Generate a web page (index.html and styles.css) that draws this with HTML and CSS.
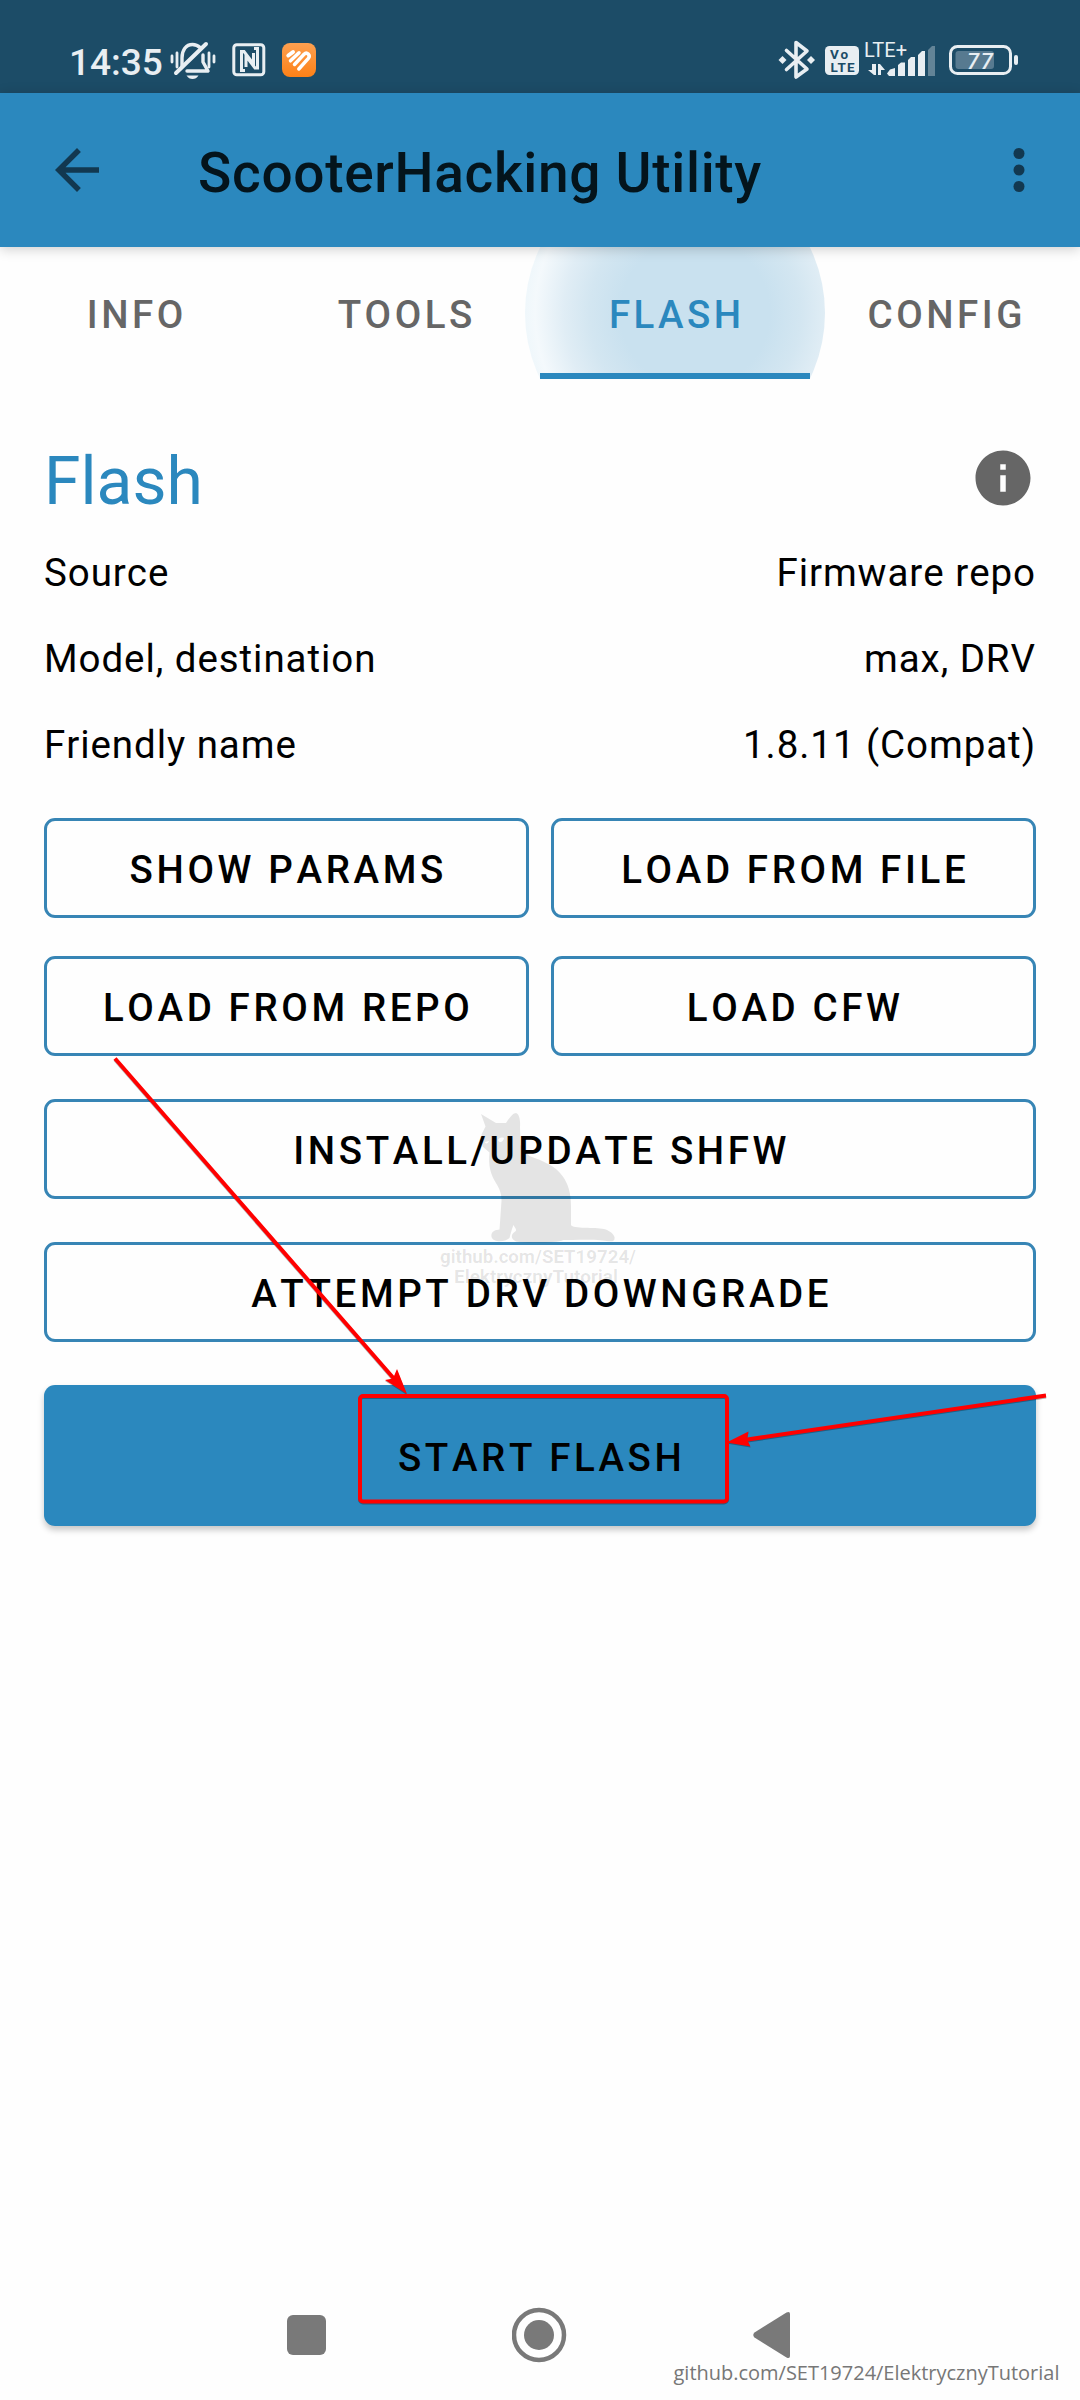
FILE: index.html
```html
<!DOCTYPE html>
<html lang="en">
<head>
<meta charset="utf-8">
<title>ScooterHacking Utility</title>
<link rel="stylesheet" href="styles.css">
</head>
<body>
<div class="screen">
  <header class="status">
    <div class="status-left">
      <span class="clock">14:35</span>
      <svg class="ic-bell" width="46" height="40" viewBox="0 0 46 40" fill="none" stroke="#e8eef2" stroke-width="3.4" stroke-linecap="round">
        <path d="M2 15v6M7 12v14M39 12v14M44 15v6" stroke-width="2.800"/>
        <path d="M12 25V17c0-8 4-13.500 10.500-13.500 3 0 5.500 1 7.500 3"/>
        <path d="M33 14v7l5 9H17" stroke-linejoin="round"/>
        <path d="M6 32 36 3" stroke-width="4"/>
        <path d="M16.500 34.500h12c-1.500 2.500-3.500 3.500-6 3.500s-4.500-1-6-3.500z" fill="#e8eef2" stroke="none"/>
      </svg>
      <svg class="ic-nfc" width="34" height="34" viewBox="0 0 34 34" fill="none" stroke="#e8eef2" stroke-width="3">
        <rect x="1.800" y="1.800" width="30" height="30" rx="3"/>
        <path d="M13 27.500H9.500V8.500H12L21.500 21V10M22 5.500h3.500V25H23L14 13v11"/>
      </svg>
      <svg class="ic-app" width="34" height="34" viewBox="0 0 34 34">
        <defs><linearGradient id="orange" x1="0" y1="0" x2="0" y2="1"><stop offset="0" stop-color="#fda050"/><stop offset="1" stop-color="#fd8117"/></linearGradient></defs>
        <rect width="34" height="34" rx="8" fill="url(#orange)"/>
        <g fill="none" stroke="#fff" stroke-width="3.500" stroke-linecap="round">
          <path d="M6.300 12.500l4.700-3.500" stroke-width="4"/><path d="M8.500 17.800l8.500-8"/>
          <path d="M12.500 21.500 22 11.200c3-2.700 6.800 1 4.300 4.300L16.800 26"/>
        </g>
      </svg>
    </div>
    <svg class="status-right" width="244" height="44" viewBox="778 38 244 44">
      <g fill="none" stroke="#e8eef2" stroke-width="3.600" stroke-linejoin="round" stroke-linecap="round">
        <path d="M786.500 50.500 807 69l-11 8V42.500l11 8.500L786.500 69.500"/>
      </g>
      <path d="M778.500 60l4-4 4 4-4 4zM807 60l4-4 4 4-4 4z" fill="#e8eef2"/>
      <rect x="825" y="46" width="34" height="29" rx="4.500" fill="#e8eef2"/>
      <text class="volte" x="830" y="58.500" textLength="18">Vo</text>
      <text class="volte" x="830.500" y="71.500" textLength="24">LTE</text>
      <text class="lte" x="864" y="57" textLength="43">LTE+</text>
      <path d="M868 70h4v-6h4v11h-2zM878 64h2l5 6h-4v5h-3z" fill="#e8eef2"/>
      <g fill="#e8eef2">
        <path d="M887 73.500l3-4 5-1.500v8h-6z"/>
        <path d="M898 65l3-2.500h4V76h-7z"/>
        <path d="M908 60l3-3h4v19h-7z"/>
        <path d="M918 55l4-4h3v25h-7z"/>
        <path d="M928 50l4-4h3v30h-7z" opacity=".35"/>
      </g>
      <rect x="950.500" y="46.500" width="60" height="27" rx="7" fill="none" stroke="#e8eef2" stroke-width="3"/>
      <rect x="955.500" y="51" width="38.500" height="18" rx="3" fill="#577a90"/>
      <rect x="1014" y="55" width="4" height="10" rx="2" fill="#e8eef2"/>
      <text class="charge" x="967" y="68.500" textLength="26">77</text>
    </svg>
  </header>

  <div class="appbar">
    <svg class="back" width="66" height="66" viewBox="0 0 24 24"><path d="M20 11H7.830l5.590-5.590L12 4l-8 8 8 8 1.410-1.410L7.830 13H20v-2z"/></svg>
    <h1 class="title">ScooterHacking Utility</h1>
    <svg class="more" width="66" height="66" viewBox="0 0 24 24"><circle cx="12" cy="6" r="2"/><circle cx="12" cy="12" r="2"/><circle cx="12" cy="18" r="2"/></svg>
  </div>

  <div class="tabs-clip">
    <nav class="tabs">
      <div class="tab">INFO</div>
      <div class="tab">TOOLS</div>
      <div class="tab active"><span class="ripple"></span><span class="tab-label">FLASH</span></div>
      <div class="tab">CONFIG</div>
    </nav>
  </div>

  <main class="content">
    <div class="heading">
      <h2>Flash</h2>
      <svg width="66" height="66" viewBox="0 0 24 24" fill="#666"><path d="M12 2C6.480 2 2 6.480 2 12s4.480 10 10 10 10-4.480 10-10S17.520 2 12 2zm1 15h-2v-6h2v6zm0-8h-2V7h2v2z"/></svg>
    </div>
    <div class="row"><span>Source</span><span>Firmware repo</span></div>
    <div class="row"><span>Model, destination</span><span>max, DRV</span></div>
    <div class="row"><span>Friendly name</span><span>1.8.11 (Compat)</span></div>
    <div class="pair first"><button class="btn">SHOW PARAMS</button><button class="btn">LOAD FROM FILE</button></div>
    <div class="pair"><button class="btn">LOAD FROM REPO</button><button class="btn">LOAD CFW</button></div>
    <button class="btn wide">INSTALL/UPDATE SHFW</button>
    <button class="btn wide">ATTEMPT DRV DOWNGRADE</button>
    <button class="btn wide solid">START FLASH</button>
  </main>

  <footer class="navbar">
    <svg width="40" height="56" viewBox="0 0 40 56" fill="#797979"><rect x="0" y="8" width="39" height="40" rx="6"/></svg>
    <svg width="56" height="56" viewBox="0 0 56 56"><circle cx="27" cy="28" r="25" fill="none" stroke="#797979" stroke-width="4.500"/><circle cx="27" cy="28" r="15" fill="#797979"/></svg>
    <svg width="38" height="56" viewBox="0 0 38 56" fill="#797979"><path d="M1.500 25.500 33.500 5.500Q37 4 37 7v42q0 3-3.500 1.500L1.500 30.500Q-1 28 1.500 25.500z"/></svg>
  </footer>

  <!-- annotations drawn over the screen -->
  <svg class="overlay" width="1080" height="2400" viewBox="0 0 1080 2400">
    <g fill="#000" fill-opacity=".1">
      <path fill-rule="evenodd" d="M481 1114l15 9h10c4-6 7-10 10-10 3.500 1 4.500 8 4 14l.5 16c0 5 4 8 9 13 14 5 26 10 33 20 6 8 8.500 18 8.500 30v19c2 4 24 2 33 4 5 1.500 9 4 10.500 8 .5 4-1 5-8 4-10-2-32-1-43-1-7 3-30 3-44 2-8 0-10-7-5-10 3-2 1-3-1-7-2 5-3 9-4 13-4 4-16 5-18-1-1-6 4-7 8-7.500l2-29c0-9-3-13-7-20-5-9-6-17-5-28l-7-6-1-12 4-8zM498 1140c1 3 5 3 6-2-3-1-5 0-6 2zM485 1142c0 2 3 2 4-1z"/>
      <text class="mark" x="440" y="1263" textLength="196" lengthAdjust="spacingAndGlyphs">github.com/SET19724/</text>
      <text class="mark" x="454" y="1283" textLength="164" lengthAdjust="spacingAndGlyphs">ElektrycznyTutorial</text>
    </g>
    <g class="arrows">
      <rect x="360" y="1396" width="367" height="105.500" rx="3" fill="none" stroke="#f00" stroke-width="4"/>
      <path d="M115 1058.500 396 1381M1046 1395.500 744 1440" fill="none" stroke="#f00" stroke-width="4"/>
      <path d="M407 1394 385 1380 393 1378.500 397 1369zM726.500 1442.500 748.500 1431.500 747 1439.500 750.500 1446.500z" fill="#f00"/>
    </g>
    <text class="credit" x="673.500" y="2380" textLength="386">github.com/SET19724/ElektrycznyTutorial</text>
  </svg>
</div>
</body>
</html>
```
FILE: styles.css
```css
* { box-sizing: border-box; }
body { margin: 0; background: #fefefe; font-family: Roboto, sans-serif; color: #000; }
h1, h2 { margin: 0; }
.screen { position: relative; width: 1080px; height: 2400px; display: flex; flex-direction: column; overflow: hidden; }

.status { height: 93px; flex: none; background: #1c4c67; display: flex; justify-content: space-between; padding: 38px 58px 0 69px; }
.status-left { display: flex; align-items: flex-start; }
.clock { font-size: 37px; font-weight: 500; line-height: 44px; width: 101px; color: #e8eef2; margin-top: 3px; }
.ic-bell { margin-top: 3px; }
.ic-nfc { margin: 5px 0 0 16px; }
.ic-app { margin: 5px 0 0 16px; }
.volte { font: 700 13.500px Roboto, sans-serif; fill: #1c4c67; }
.lte { font: 400 20px Roboto, sans-serif; fill: #e8eef2; }
.charge { font: italic 500 22px Roboto, sans-serif; fill: #e8eef2; }

.appbar { position: relative; z-index: 2; height: 154px; flex: none; background: #2b88be; display: flex; align-items: center; padding: 0 28px 0 44px; box-shadow: 0 2px 12px rgba(0, 0, 0, .2); }
.back, .more { flex: none; fill: #123850; }
.title { flex: 1; margin-left: 88px; font-size: 55px; font-weight: 500; line-height: 66px; padding-top: 5px; letter-spacing: .690px; color: #04141c; white-space: nowrap; }

.tabs-clip { height: 132px; flex: none; overflow: hidden; }
.tabs { display: grid; grid-template-columns: repeat(4, 1fr); height: 132px; }
.tab { position: relative; display: flex; align-items: center; justify-content: center; font-size: 38.500px; font-weight: 500; font-kerning: none; letter-spacing: 3.500px; padding-left: 3.440px; padding-top: 3px; color: #666; }
.active { color: #2b88be; }
.active::after { content: ""; position: absolute; left: 0; right: 0; bottom: 0; height: 6px; background: #2b88be; }
.tab-label { position: relative; }
.ripple { position: absolute; left: -15px; top: -84px; width: 300px; height: 300px; border-radius: 50%; background: radial-gradient(circle 170px at 170px 150px, #c9e1ef 44%, #d3e6f1 62%, #e0edf5 77%, #f4f9fc 94%, #eff7fb 100%); }

.content { flex: 1; padding: 66px 44px 0; }
.heading { display: flex; justify-content: space-between; align-items: flex-start; height: 92px; }
.heading h2 { font-size: 66px; font-weight: 400; line-height: 78px; margin-top: -2px; color: #2b88be; }
.row { display: flex; justify-content: space-between; height: 86px; padding-top: 13px; font-size: 38.500px; line-height: 46px; font-kerning: none; letter-spacing: .940px; }
.pair { display: grid; grid-template-columns: 1fr 1fr; gap: 22px; margin-top: 38px; }
.pair.first { margin-top: 23px; }
.btn { display: flex; align-items: center; justify-content: center; height: 100px; border: 3px solid #3785b5; border-radius: 11px; background: transparent; padding: 3px 0 0 3.440px; font: 500 38.500px Roboto, sans-serif; font-kerning: none; letter-spacing: 3.620px; color: #000; }
.wide { width: 100%; margin-top: 43px; }
.solid { height: 141px; border: 0; background: #2b88be; box-shadow: 0 4px 6px rgba(0, 0, 0, .22); }

.navbar { height: 93px; flex: none; display: flex; justify-content: space-between; padding: 0 289px 0 287px; }

.overlay { position: absolute; left: 0; top: 0; z-index: 3; pointer-events: none; }
.mark { font: 700 17.500px Roboto, sans-serif; }
.arrows { filter: drop-shadow(0 1px .5px rgba(0, 0, 0, .3)); }
.credit { font: 400 20px "Open Sans", sans-serif; fill: #777; }
```
